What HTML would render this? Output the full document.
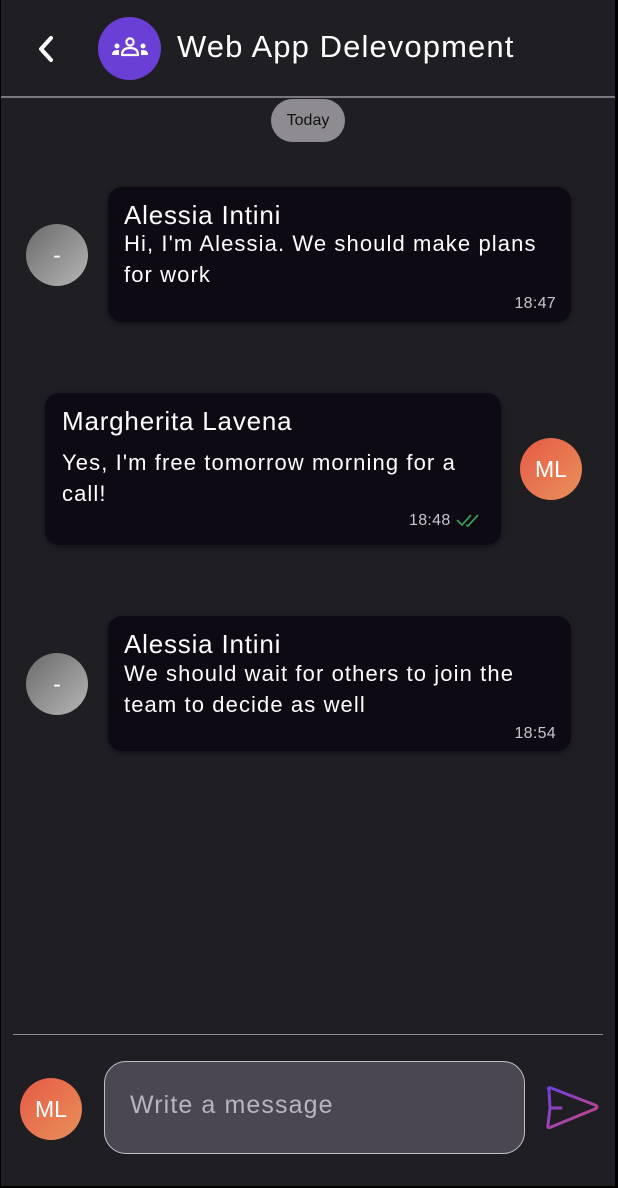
<!DOCTYPE html>
<html><head><meta charset="utf-8"><style>
*{margin:0;padding:0;box-sizing:border-box}
body{width:618px;height:1188px;background:#000;font-family:"Liberation Sans",sans-serif;overflow:hidden;position:relative}
#app{position:absolute;left:1px;top:0;width:614px;height:1186px;background:#1f1e23}
.a{position:absolute}
.hl{position:absolute;height:2px;background:#7a797d}
.bub{position:absolute;background:#0e0a13;border-radius:14px;color:#fff;box-shadow:0 2px 6px rgba(0,0,0,.4)}
.name{position:absolute;font-size:26px;letter-spacing:.8px;white-space:nowrap}
.txt{position:absolute;font-size:22px;line-height:31px;letter-spacing:1.1px}
.time{position:absolute;font-size:16px;color:#c8c6cc;letter-spacing:.3px}
.av{position:absolute;width:62px;height:62px;border-radius:50%;color:#fff;display:flex;align-items:center;justify-content:center;font-size:23px}
.grey{background:linear-gradient(135deg,#6a6a6a,#b5b5b5)}
.org{background:linear-gradient(135deg,#e65a45,#e8905a)}
</style></head><body><div id="app">
<svg class="a" style="left:34px;top:35px" width="22" height="28" viewBox="0 0 22 28"><path d="M16 3 L6 14 L16 25" fill="none" stroke="#fff" stroke-width="4" stroke-linecap="round" stroke-linejoin="round"/></svg>
<div class="a" style="left:97px;top:17px;width:63px;height:63px;border-radius:50%;background:#6a3fd6"></div>
<svg class="a" style="left:107px;top:37px" width="44" height="22" viewBox="0 0 44 22"><circle cx="22" cy="5" r="3.6" fill="none" stroke="#fff" stroke-width="2.2"/><path d="M14 18 Q14 11 22 11 Q30 11 30 18 Z" fill="none" stroke="#fff" stroke-width="2.2" stroke-linejoin="round"/><circle cx="9" cy="9" r="2.5" fill="#fff"/><circle cx="35" cy="9" r="2.5" fill="#fff"/><path d="M4 18 Q4 13 9 13 L11 13 L11 18Z" fill="#fff"/><path d="M40 18 Q40 13 35 13 L33 13 L33 18Z" fill="#fff"/></svg>
<div class="a" style="left:176px;top:29px;font-size:31px;letter-spacing:1.1px;color:#fff;white-space:nowrap">Web App Delevopment</div>
<div class="hl" style="left:0;top:96px;width:614px"></div>
<div class="a" style="left:270px;top:99px;width:74px;height:43px;border-radius:22px;background:#8e8c91;color:#111;font-size:16px;text-align:center;line-height:43px">Today</div>

<div class="av grey" style="left:25px;top:224px">-</div>
<div class="bub" style="left:107px;top:187px;width:463px;height:135px">
<div class="name" style="left:16px;top:13px">Alessia Intini</div>
<div class="txt" style="left:16px;top:41px;width:430px">Hi, I'm Alessia. We should make plans for work</div>
<div class="time" style="right:15px;top:108px">18:47</div></div>

<div class="bub" style="left:44px;top:393px;width:456px;height:152px">
<div class="name" style="left:17px;top:13px">Margherita Lavena</div>
<div class="txt" style="left:17px;top:54px;width:425px">Yes, I'm free tomorrow morning for a call!</div>
<div class="time" style="left:364px;top:119px">18:48</div>
<svg class="a" style="left:410px;top:119px" width="30" height="16" viewBox="0 0 30 16"><path d="M2 8 L7 13 L16 3 M11 13 L13 14 L23 3" fill="none" stroke="#3a9a52" stroke-width="1.8"/></svg></div>
<div class="av org" style="left:519px;top:438px">ML</div>

<div class="av grey" style="left:25px;top:653px">-</div>
<div class="bub" style="left:107px;top:616px;width:463px;height:135px">
<div class="name" style="left:16px;top:13px">Alessia Intini</div>
<div class="txt" style="left:16px;top:42px;width:420px">We should wait for others to join the team to decide as well</div>
<div class="time" style="right:15px;top:109px">18:54</div></div>

<div class="hl" style="left:12px;top:1034px;width:590px;height:1px;background:#8a898d"></div>
<div class="av org" style="left:19px;top:1078px;width:62px;height:62px">ML</div>
<div class="a" style="left:103px;top:1061px;width:421px;height:93px;border:1.5px solid #c2c0c6;border-radius:22px;background:#4a4752;color:#b8b5bd;font-size:25px;letter-spacing:1.1px;padding:29px 0 0 25px;white-space:nowrap">Write a message</div>
<svg class="a" style="left:540px;top:1084px" width="62" height="50" viewBox="0 0 62 50"><defs><linearGradient id="g" x1="0" y1="0" x2="1" y2="1"><stop offset="0" stop-color="#6a3fe0"/><stop offset="1" stop-color="#d5457a"/></linearGradient></defs><path d="M8 6 Q6 3 10 4 L54 21 Q58 23 54 25 L10 43 Q6 45 7 41 L9 24 Z M9 24 L20 24" fill="none" stroke="url(#g)" stroke-width="3" stroke-linejoin="round" stroke-linecap="round"/></svg>
</div></body></html>
